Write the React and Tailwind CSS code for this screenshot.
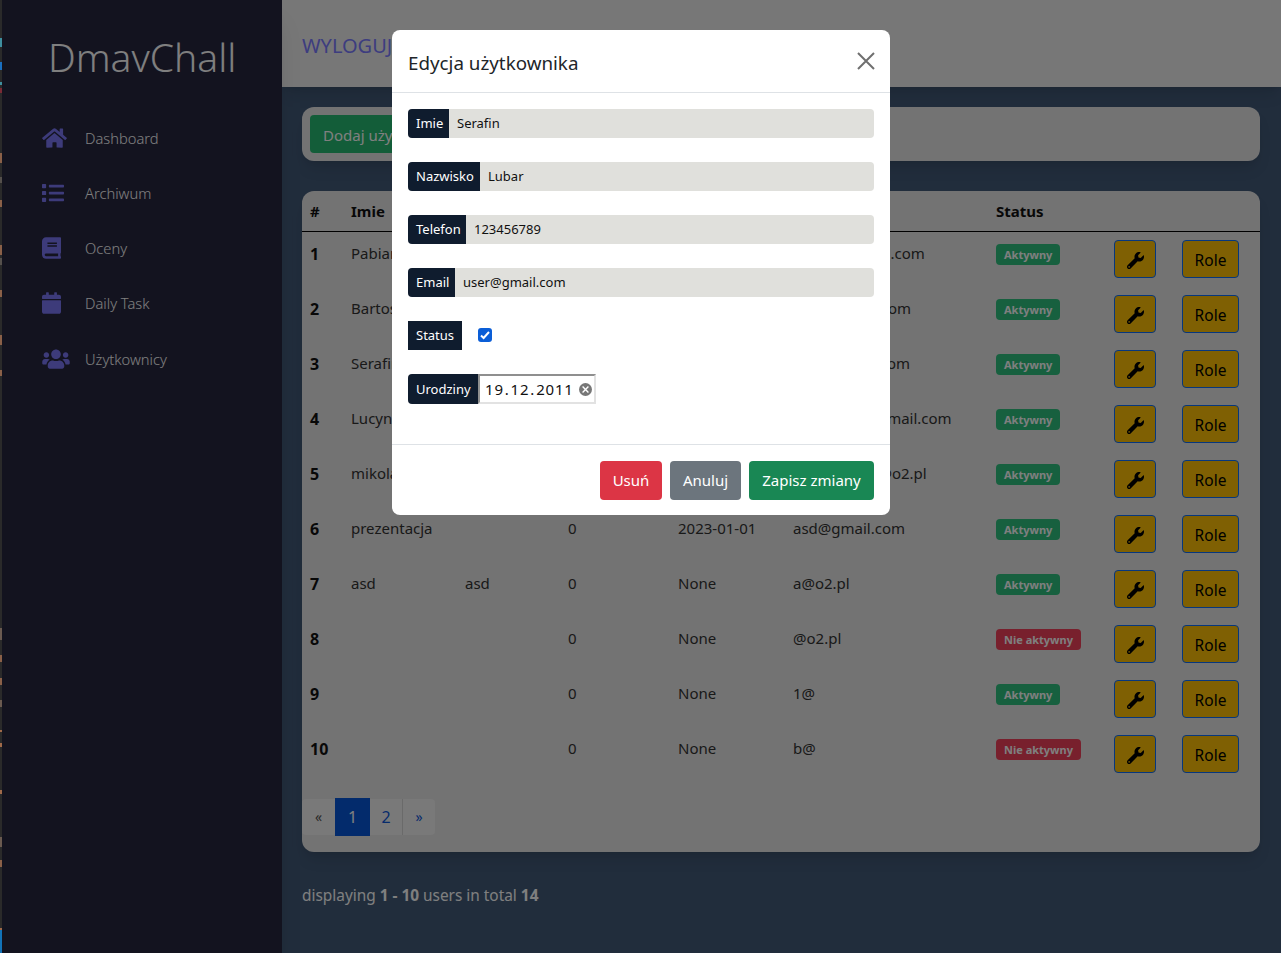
import { FaHome, FaList, FaBook, FaCalendar, FaUsers, FaWrench } from "react-icons/fa";

const nav = [
  { label: "Dashboard", Icon: FaHome, size: "h-[22px] w-[25px]" },
  { label: "Archiwum", Icon: FaList, size: "h-[22px] w-[22px]" },
  { label: "Oceny", Icon: FaBook, size: "h-[22px] w-[19px]" },
  { label: "Daily Task", Icon: FaCalendar, size: "h-[22px] w-[19px]" },
  { label: "Użytkownicy", Icon: FaUsers, size: "h-[22px] w-[28px]" },
];

const users = [
  { id: 1, first: "Pabian", last: "", phone: "0", born: "None", email: "user-1@gmail.com", active: true },
  { id: 2, first: "Bartosz", last: "", phone: "0", born: "None", email: "bartosz@o2.com", active: true },
  { id: 3, first: "Serafin", last: "", phone: "0", born: "None", email: "serafin@wp.com", active: true },
  { id: 4, first: "Lucyna", last: "", phone: "0", born: "None", email: "lucyna123@gmail.com", active: true },
  { id: 5, first: "mikolaj", last: "", phone: "0", born: "None", email: "mikolaj1234@o2.pl", active: true },
  { id: 6, first: "prezentacja", last: "", phone: "0", born: "2023-01-01", email: "asd@gmail.com", active: true },
  { id: 7, first: "asd", last: "asd", phone: "0", born: "None", email: "a@o2.pl", active: true },
  { id: 8, first: "", last: "", phone: "0", born: "None", email: "@o2.pl", active: false },
  { id: 9, first: "", last: "", phone: "0", born: "None", email: "1@", active: true },
  { id: 10, first: "", last: "", phone: "0", born: "None", email: "b@", active: false },
];

// leftover bits of another window along the left edge
const edgeBits = [
  [38, 9, "#3f8f9f"], [62, 8, "#1a6fc0"], [82, 3, "#3f8f9f"], [88, 5, "#7a2a35"], [153, 10, "#8a6048"],
  [177, 6, "#55504c"], [200, 7, "#8a6048"], [245, 10, "#8a6048"], [258, 7, "#55504c"], [290, 7, "#8a6048"],
  [335, 10, "#8a6048"], [370, 6, "#8a6048"], [628, 12, "#6a5a50"], [655, 7, "#8a6048"], [678, 7, "#8a6048"],
  [700, 7, "#6a5a50"], [730, 2, "#a06a4a"], [743, 4, "#a06a4a"], [790, 4, "#a06a4a"], [837, 10, "#6a5a50"],
  [860, 7, "#8a6048"], [928, 2, "#a06a4a"], [930, 23, "#1273b8"],
];

const cols = "grid grid-cols-[41px_114px_103px_110px_115px_203px_118px_68px_1fr]";

function Field({ label, value, width }) {
  return (
    <div className="flex h-[29px] text-[13px]">
      <span className={`flex items-center rounded-l-[4px] bg-[#0f1c2e] pt-px pl-2 text-white ${width}`}>{label}</span>
      <input
        readOnly
        value={value}
        className="min-w-0 flex-1 rounded-r-[4px] bg-[#e0e0dc] px-2 pt-px text-[#111] outline-none"
      />
    </div>
  );
}

export default function App() {
  return (
    <div className="flex min-h-[953px] bg-[#425a78] font-['Noto_Sans',sans-serif] text-[15px]">
      <svg width="2" height="953" className="relative z-10 shrink-0 bg-[#2a2a2a]">
        {edgeBits.map(([y, h, fill]) => (
          <rect key={y} x="0" y={y} width="2" height={h} fill={fill} />
        ))}
      </svg>

      <aside className="relative w-[280px] shrink-0 bg-[#26263e] shadow-xl">
        <h1 className="pt-[30px] pl-[46px] text-[39px] leading-[54px] font-light text-white">DmavChall</h1>
        <nav className="mt-[26px] flex flex-col">
          {nav.map(({ label, Icon, size }) => (
            <div key={label} className="flex h-[55.25px] items-center pl-10 text-[14.7px] font-light text-white">
              <span className="flex w-[43px] text-[#7a76f5]"><Icon className={size} /></span>
              {label}
            </div>
          ))}
        </nav>
      </aside>

      <main className="min-w-0 flex-1">
        <header className="flex h-[87px] items-center bg-[#eeeeee] pt-[5px] pl-5 text-xl text-[#7a7aff] shadow-lg">
          WYLOGUJ
        </header>

        <div className="pt-5 pr-[21px] pl-5">
          <div className="rounded-xl bg-[#e6e6e6] p-2 shadow-lg">
            <button className="h-[38px] rounded-[4px] bg-[#26bb73] pt-0.5 pr-3 pl-[13px] text-white">Dodaj użytkownika</button>
          </div>

          <div className="mt-[30px] h-[661px] rounded-xl bg-[#e6e6e6] shadow-lg">
            <div className={`${cols} h-[41px] items-center border-b border-black pl-2 font-bold text-[#111]`}>
              <span>#</span>
              <span>Imie</span>
              <span>Nazwisko</span>
              <span>Telefon</span>
              <span>Urodziny</span>
              <span>Email</span>
              <span>Status</span>
            </div>
            {users.map((u) => (
              <div key={u.id} className={`${cols} h-[55px] pt-[10px] pl-2 text-[#333]`}>
                <span className="text-base font-bold text-[#111]">{u.id}</span>
                <span>{u.first}</span>
                <span>{u.last}</span>
                <span>{u.phone}</span>
                <span>{u.born}</span>
                <span>{u.email}</span>
                <span>
                  <span
                    className={`inline-block h-[21px] rounded-[4px] px-2 text-[11px] leading-[21px] font-bold text-white ${
                      u.active ? "bg-[#2ec07e]" : "bg-[#f0405a]"
                    }`}
                  >
                    {u.active ? "Aktywny" : "Nie aktywny"}
                  </span>
                </span>
                <span>
                  <button className="-mt-[2px] flex h-[38px] w-[42px] items-center justify-center rounded-[4px] border border-[#0d6efd] bg-[#ffc107] pt-0.5 text-black">
                    <FaWrench size={17} />
                  </button>
                </span>
                <span>
                  <button className="-mt-[2px] h-[38px] w-[57px] rounded-[4px] border border-[#0d6efd] bg-[#ffc107] pt-1 text-[15.5px] text-black">
                    Role
                  </button>
                </span>
              </div>
            ))}
            <div className="mt-4 flex h-[38px] items-center">
              <span className="flex h-9 w-[33px] items-center justify-center rounded-l-[4px] bg-[#f2f2f2] text-sm text-[#555]">«</span>
              <span className="flex h-[38px] w-[35px] items-center justify-center bg-[#0757d8] text-base text-white">1</span>
              <span className="flex h-9 w-[32px] items-center justify-center bg-[#f2f2f2] text-base text-[#0d57d8]">2</span>
              <span className="flex h-9 w-[33px] items-center justify-center rounded-r-[4px] border-l border-[#d4d4d4] bg-[#f2f2f2] text-sm text-[#0d57d8]">»</span>
            </div>
          </div>

          <p className="mt-[32px] text-[15.4px] text-white">
            displaying <b>1 - 10</b> users in total <b>14</b>
          </p>
        </div>
      </main>

      <div className="fixed inset-0 bg-black/50" />

      <div className="fixed top-[30px] left-[392px] h-[485px] w-[498px] rounded-lg bg-white text-[#212529]">
        <div className="flex h-[63px] items-center justify-between border-b border-[#dee2e6] pr-[15px] pl-4">
          <h2 className="mt-1 text-[18.8px]">Edycja użytkownika</h2>
          <svg width="18" height="18" viewBox="0 0 18 18" stroke="#6f6f6f" strokeWidth="2" fill="none">
            <path d="M1 1l16 16M17 1L1 17" />
          </svg>
        </div>
        <div className="flex h-[352px] flex-col gap-6 border-b border-[#dee2e6] px-4 pt-4">
          <Field label="Imie" value="Serafin" width="w-[41px]" />
          <Field label="Nazwisko" value="Lubar" width="w-[72px]" />
          <Field label="Telefon" value="123456789" width="w-[58px]" />
          <Field label="Email" value="user@gmail.com" width="w-[47px]" />
          <div className="flex h-[29px] text-[13px]">
            <span className="flex w-[54px] items-center bg-[#0f1c2e] pt-px pl-2 text-white">Status</span>
            <span className="ml-4 mb-[1px] flex h-3.5 w-3.5 items-center justify-center self-center rounded-[3px] bg-[#0b5ed7]">
              <svg width="10" height="10" viewBox="0 0 10 10" fill="none" stroke="white" strokeWidth="2">
                <path d="M1 5.5l2.6 2.5L9 2" />
              </svg>
            </span>
          </div>
          <div className="flex h-[30px] text-[13px]">
            <span className="flex w-[70px] items-center rounded-l-[4px] bg-[#0f1c2e] pt-0.5 pl-2 text-white">Urodziny</span>
            <span className="flex w-[118px] items-center border-2 border-t-[#8f8f8f] border-r-[#e2e2e2] border-b-[#e2e2e2] border-l-[#8f8f8f] pt-px pl-[5px] text-[15px] tracking-[0.8px] text-[#111]">
              19<span className="mx-px">.</span>12<span className="mx-px">.</span>2011
              <span className="ml-[5px] flex h-[13px] w-[13px] items-center justify-center rounded-full bg-[#777]">
                <svg width="7" height="7" viewBox="0 0 6 6" stroke="white" strokeWidth="1.2">
                  <path d="M0.5 0.5l5 5M5.5 0.5l-5 5" />
                </svg>
              </span>
            </span>
          </div>
        </div>
        <div className="flex justify-end gap-2 px-4 pt-4">
          <button className="h-[39px] w-[62px] rounded-[4px] bg-[#dc3545] text-white">Usuń</button>
          <button className="h-[39px] w-[71px] rounded-[4px] bg-[#6c757d] text-white">Anuluj</button>
          <button className="h-[39px] w-[125px] rounded-[4px] bg-[#198754] text-white">Zapisz zmiany</button>
        </div>
      </div>
    </div>
  );
}
